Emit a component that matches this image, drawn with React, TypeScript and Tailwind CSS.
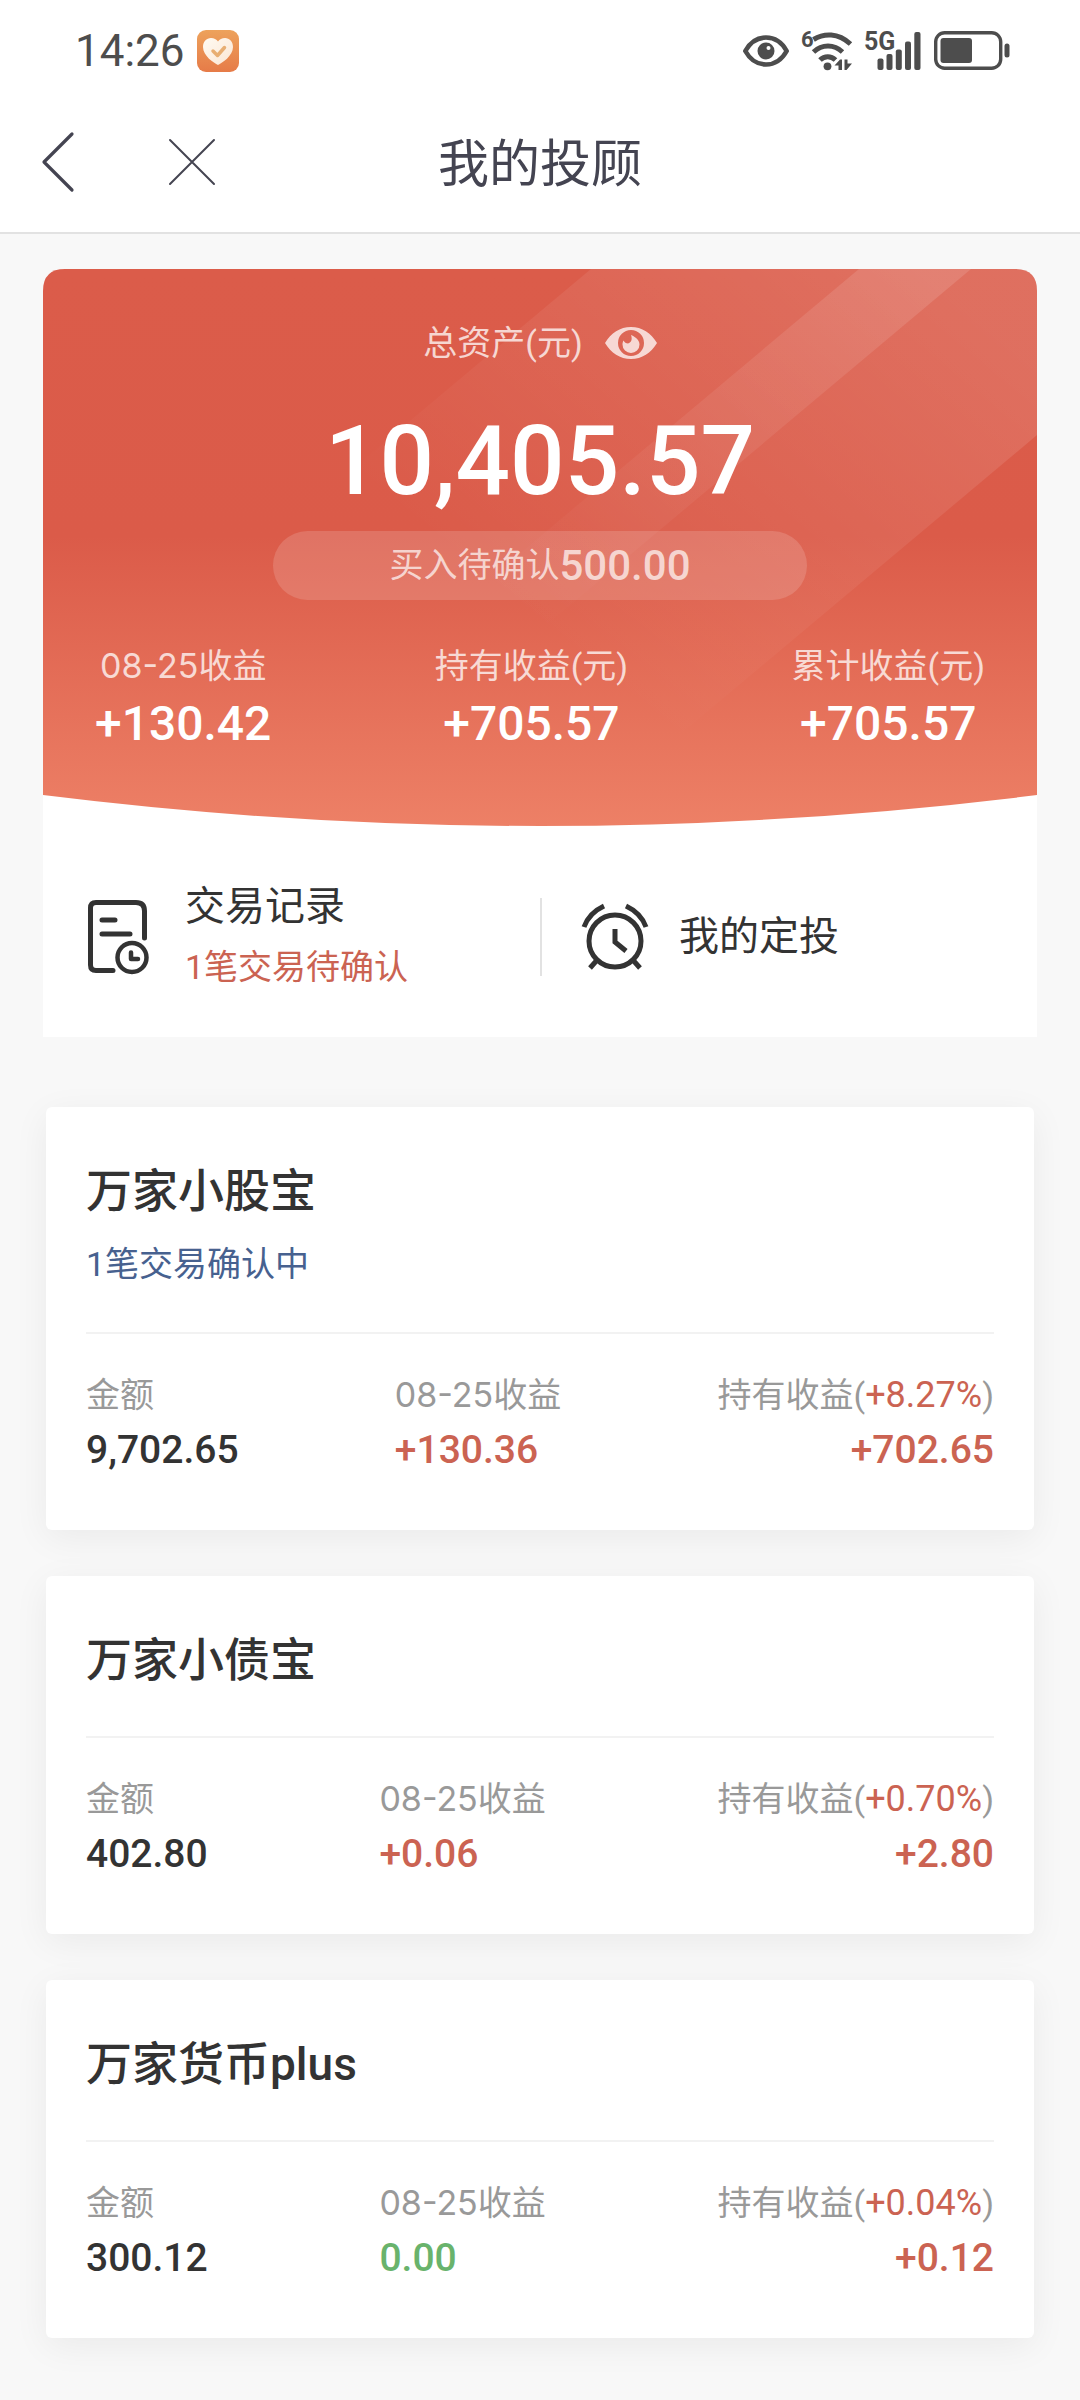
import React, { useState } from 'react';

interface Fund {
  name: string;
  notice?: string;
  amount: string;
  daily: string;
  rate: string;
  total: string;
}

const funds: Fund[] = [
  { name: '万家小股宝', notice: '1笔交易确认中', amount: '9,702.65', daily: '+130.36', rate: '+8.27%', total: '+702.65' },
  { name: '万家小债宝', amount: '402.80', daily: '+0.06', rate: '+0.70%', total: '+2.80' },
  { name: '万家货币plus', amount: '300.12', daily: '0.00', rate: '+0.04%', total: '+0.12' },
];

const stats = [
  { label: '收益', date: '08-25', value: '+130.42' },
  { label: '持有收益(元)', value: '+705.57' },
  { label: '累计收益(元)', value: '+705.57' },
];

const StatusBar: React.FC = () => (
  <div className="flex h-[102px] items-center justify-between pl-[75px] pr-[70px] text-[#4d4d4d]">
    <div className="flex items-center gap-3">
      <span className="text-[44px] leading-[52px]">14:26</span>
      <svg className="h-[42px] w-[42px]" viewBox="0 0 42 42">
        <defs>
          <linearGradient id="app-bg" x1="0" y1="0" x2="0" y2="1">
            <stop offset="0" stopColor="#eda25c" />
            <stop offset="1" stopColor="#e67b48" />
          </linearGradient>
          <linearGradient id="app-heart" x1="0" y1="0" x2="1" y2="1">
            <stop offset="0" stopColor="#fffaf2" />
            <stop offset="1" stopColor="#fbe6d3" />
          </linearGradient>
        </defs>
        <rect width="42" height="42" rx="9" fill="url(#app-bg)" />
        <path d="M21 35C17 33 6 26 6 17C6 11.500 9.500 8 14 8C17 8 19.500 9.500 21 11.500C22.500 9.500 25 8 28 8C32.500 8 36 11.500 36 17C36 26 25 33 21 35Z" fill="url(#app-heart)" />
        <path d="M16 21L20.500 25.500L27.500 17.500" fill="none" stroke="#e8ae72" strokeWidth="3.500" strokeLinecap="round" strokeLinejoin="round" />
      </svg>
    </div>

    <div className="flex items-center gap-3">
      <svg className="h-[32px] w-[46px]" viewBox="0 0 46 32" fill="none">
        <path d="M2.300 16C7 7.500 14 2.500 23 2.500S39 7.500 43.700 16C39 24.500 32 29.500 23 29.500S7 24.500 2.300 16Z" stroke="currentColor" strokeWidth="4.600" strokeLinejoin="round" />
        <circle cx="23" cy="16" r="8.500" fill="currentColor" />
        <circle cx="25.500" cy="13" r="2" fill="#fff" />
      </svg>
      <svg className="h-[42px] w-[51px] overflow-visible font-['Liberation_Sans_Narrow','Roboto',sans-serif]" viewBox="0 0 51 42" fill="currentColor">
        <text x="0" y="17" fontSize="22" fontWeight="700">6</text>
        <g fill="none" stroke="currentColor" strokeWidth="5">
          <path d="M12.500 9.500C23 3 37 2.500 49.500 14" />
          <path d="M12.500 22C21 14 33 14 41.500 22" />
          <path d="M19 30C23.500 25.500 30 25.500 34.500 30" />
        </g>
        <circle cx="26.500" cy="36.300" r="3.900" />
        <path d="M33.500 35.500L39 29.500H41V40H37.500V35.500ZM43.500 29.500H46.500V33.500H51L45.500 40H43.500Z" />
      </svg>
      <svg className="h-[42px] w-[58px] overflow-visible font-['Liberation_Sans_Narrow','Roboto',sans-serif]" viewBox="0 0 58 42" fill="currentColor">
        <text x="0" y="20" fontSize="25" fontWeight="700">5G</text>
        <rect x="13.500" y="28.500" width="6" height="11.500" rx="2" />
        <rect x="22.500" y="24" width="6" height="16" rx="2" />
        <rect x="31.800" y="19.500" width="6" height="20.500" rx="2" />
        <rect x="41" y="11.500" width="6" height="28.500" rx="2" />
        <rect x="50.300" y="2" width="6.200" height="38" rx="2" />
      </svg>
      <svg className="h-[40px] w-[76px]" viewBox="0 0 76 40">
        <rect x="1.700" y="1.700" width="65" height="35.600" rx="9" fill="none" stroke="currentColor" strokeWidth="3.400" />
        <rect x="6.500" y="7" width="31.500" height="25" rx="3" fill="currentColor" />
        <rect x="70.500" y="12.500" width="5" height="14" rx="2.500" fill="currentColor" />
      </svg>
    </div>
  </div>
);

const NavBar: React.FC = () => (
  <nav className="grid h-[132px] grid-cols-[1fr_auto_1fr] items-center border-b-2 border-[#e2e2e2] pb-[10px] pl-[40px] text-[#444451]">
    <div className="flex items-center gap-[92px]">
      <button type="button" aria-label="返回">
        <svg className="h-[64px] w-[36px]" viewBox="0 0 36 64" fill="none" stroke="currentColor" strokeWidth="3.200" strokeLinecap="round" strokeLinejoin="round">
          <path d="M32 4L4 32L32 60" />
        </svg>
      </button>
      <button type="button" aria-label="关闭">
        <svg className="h-[48px] w-[48px]" viewBox="0 0 48 48" stroke="currentColor" strokeWidth="2" strokeLinecap="round">
          <path d="M2 2L46 46M46 2L2 46" />
        </svg>
      </button>
    </div>
    <h1 className="-ml-[40px] pt-[5px] text-[51px] leading-[64px]">我的投顾</h1>
  </nav>
);

const HeroBackground: React.FC = () => (
  <svg className="absolute inset-0 h-full w-full" viewBox="0 0 994 558" preserveAspectRatio="none">
    <defs>
      <linearGradient id="hero-bg" x1="0" y1="0" x2="0" y2="1">
        <stop offset="0" stopColor="#db5c4a" />
        <stop offset="0.480" stopColor="#db5b49" />
        <stop offset="1" stopColor="#ed8066" />
      </linearGradient>
      <linearGradient id="hero-band" gradientUnits="userSpaceOnUse" x1="870" y1="0" x2="540" y2="400">
        <stop offset="0" stopColor="#fff" stopOpacity="0.120" />
        <stop offset="1" stopColor="#fff" stopOpacity="0" />
      </linearGradient>
      <clipPath id="hero-clip">
        <path d="M0 22Q0 0 22 0H972Q994 0 994 22V527Q497 589 0 527Z" />
      </clipPath>
    </defs>
    <g clipPath="url(#hero-clip)">
      <rect width="994" height="558" fill="url(#hero-bg)" />
      <path d="M548 0H1192L522 563H-122Z" fill="url(#hero-band)" />
      <path d="M816 0H928L258 563H146Z" fill="url(#hero-band)" />
    </g>
  </svg>
);

const AssetPanel: React.FC = () => {
  const [hidden, setHidden] = useState(false);
  const mask = (text: string) => (hidden ? '****' : text);

  return (
    <section className="rounded-t-[22px] bg-white">
      <div className="relative">
        <HeroBackground />
        <div className="relative flex flex-col items-center pt-[50px] pb-[74px] text-white">
          <div className="flex items-center gap-[22px] text-white/75">
            <span className="text-[34px] leading-[48px]">总资产(元)</span>
            <button type="button" aria-label="显示或隐藏金额" onClick={() => setHidden(!hidden)}>
              <svg className="h-[32px] w-[52px]" viewBox="0 0 52 32">
                <path fillRule="evenodd" d="M0 16C6 6 15 0 26 0S46 6 52 16C46 26 37 32 26 32S6 26 0 16ZM26 3A13 13 0 1 0 26 29A13 13 0 1 0 26 3Z" fill="currentColor" />
                <path d="M26 8C29 9.500 34.500 12 34.500 17.500A8.500 8.500 0 0 1 17.500 17.500C17.500 15.500 18 14.500 18.500 13.500C19.500 15.500 21 16.500 23 16.500C26.500 15.500 27.500 12 26 8Z" fill="currentColor" />
              </svg>
            </button>
          </div>
          <p className="mt-[38px] text-[96px] leading-[112px] font-medium">{mask('10,405.57')}</p>
          <div className="mt-[14px] flex h-[69px] w-[534px] items-center justify-center rounded-full bg-white/15 text-white/70">
            <span className="text-[34px]">买入待确认</span>
            <span className="text-[42px] font-medium">{mask('500.00')}</span>
          </div>
          <dl className="mt-[42px] flex w-full justify-between px-[52px] text-center">
            {stats.map((item) => (
              <div key={item.label}>
                <dt className="text-[34px] leading-[48px] text-white/75">
                  {item.date && <span className="font-[Inter]">{item.date}</span>}
                  {item.label}
                </dt>
                <dd className="mt-[6px] text-[48px] leading-[56px] font-medium">{mask(item.value)}</dd>
              </div>
            ))}
          </dl>
        </div>
      </div>

      <div className="grid h-[211px] grid-cols-2 items-center pt-[10px] text-[#333]">
        <a href="#records" className="flex items-center gap-[33px] pl-[43px]">
          <svg className="h-[78px] w-[66px]" viewBox="0 0 66 78" fill="none" stroke="currentColor" strokeWidth="5" strokeLinecap="round" strokeLinejoin="round">
            <path d="M27 72.500H10Q4.500 72.500 4.500 67V10Q4.500 4.500 10 4.500H50Q58.500 4.500 58.500 13V40" />
            <path d="M16 22H29M16 36H44" />
            <circle cx="46" cy="59.500" r="14.500" stroke="currentColor" strokeWidth="4.500" />
            <path d="M45 54.500V61H52" strokeWidth="4.500" />
          </svg>
          <span className="flex flex-col">
            <span className="text-[40px] leading-[60px]">交易记录</span>
            <span className="text-[34px] leading-[60px] text-[#cb6352]">1笔交易待确认</span>
          </span>
        </a>
        <a href="#plan" className="flex h-[78px] items-center gap-[29px] border-l-2 border-[#e2e2e2] pl-[38px]">
          <svg className="h-[68px] w-[70px]" viewBox="0 0 70 68" fill="none" stroke="currentColor" strokeWidth="5">
            <circle cx="35" cy="38" r="26" />
            <path d="M35 26V39L46 48" strokeWidth="5" />
            <path d="M4 24Q9 10 24 3M66 24Q61 10 46 3" strokeWidth="5" />
            <path d="M18 56L10 65M52 56L60 65" strokeWidth="5" />
          </svg>
          <span className="text-[40px] leading-[60px]">我的定投</span>
        </a>
      </div>
    </section>
  );
};

const FundCard: React.FC<{ fund: Fund }> = ({ fund }) => (
  <article className="rounded-md bg-white px-[40px] pt-[52px] pb-[52px] shadow-[0_8px_36px_rgba(0,0,0,0.06)]">
    <div className="border-b-2 border-[#f2f2f2] pb-[44px]">
      <h2 className="text-[46px] leading-[64px] font-medium">{fund.name}</h2>
      {fund.notice && <p className="mt-[17px] text-[34px] leading-[48px] text-[#47618f]">{fund.notice}</p>}
    </div>
    <dl className="mt-[37px] flex justify-between">
      <div>
        <dt className="text-[34px] leading-[48px] text-[#999]">金额</dt>
        <dd className="mt-[3px] text-[39px] leading-[56px] font-medium">{fund.amount}</dd>
      </div>
      <div>
        <dt className="text-[34px] leading-[48px] text-[#999]">
          <span className="font-[Inter]">08-25</span>收益
        </dt>
        <dd className={`mt-[3px] text-[39px] leading-[56px] font-medium ${fund.daily.startsWith('+') ? 'text-[#cb6352]' : 'text-[#69b36c]'}`}>
          {fund.daily}
        </dd>
      </div>
      <div className="text-right">
        <dt className="text-[34px] leading-[48px] text-[#999]">
          持有收益(<span className="text-[36px]/[48px] text-[#cb6352]">{fund.rate}</span>)
        </dt>
        <dd className="mt-[3px] text-[39px] leading-[56px] font-medium text-[#cb6352]">{fund.total}</dd>
      </div>
    </dl>
  </article>
);

const App: React.FC = () => (
  <div className="min-h-screen bg-[#f8f8f8] font-['Roboto','Noto_Sans_CJK_SC',sans-serif] text-[#333]">
    <header className="bg-white">
      <StatusBar />
      <NavBar />
    </header>
    <main className="px-[43px] pt-[35px] pb-[64px]">
      <AssetPanel />
      <div className="mt-[70px] flex flex-col gap-[46px] px-[3px]">
        {funds.map((fund) => (
          <FundCard key={fund.name} fund={fund} />
        ))}
      </div>
    </main>
  </div>
);

export default App;
